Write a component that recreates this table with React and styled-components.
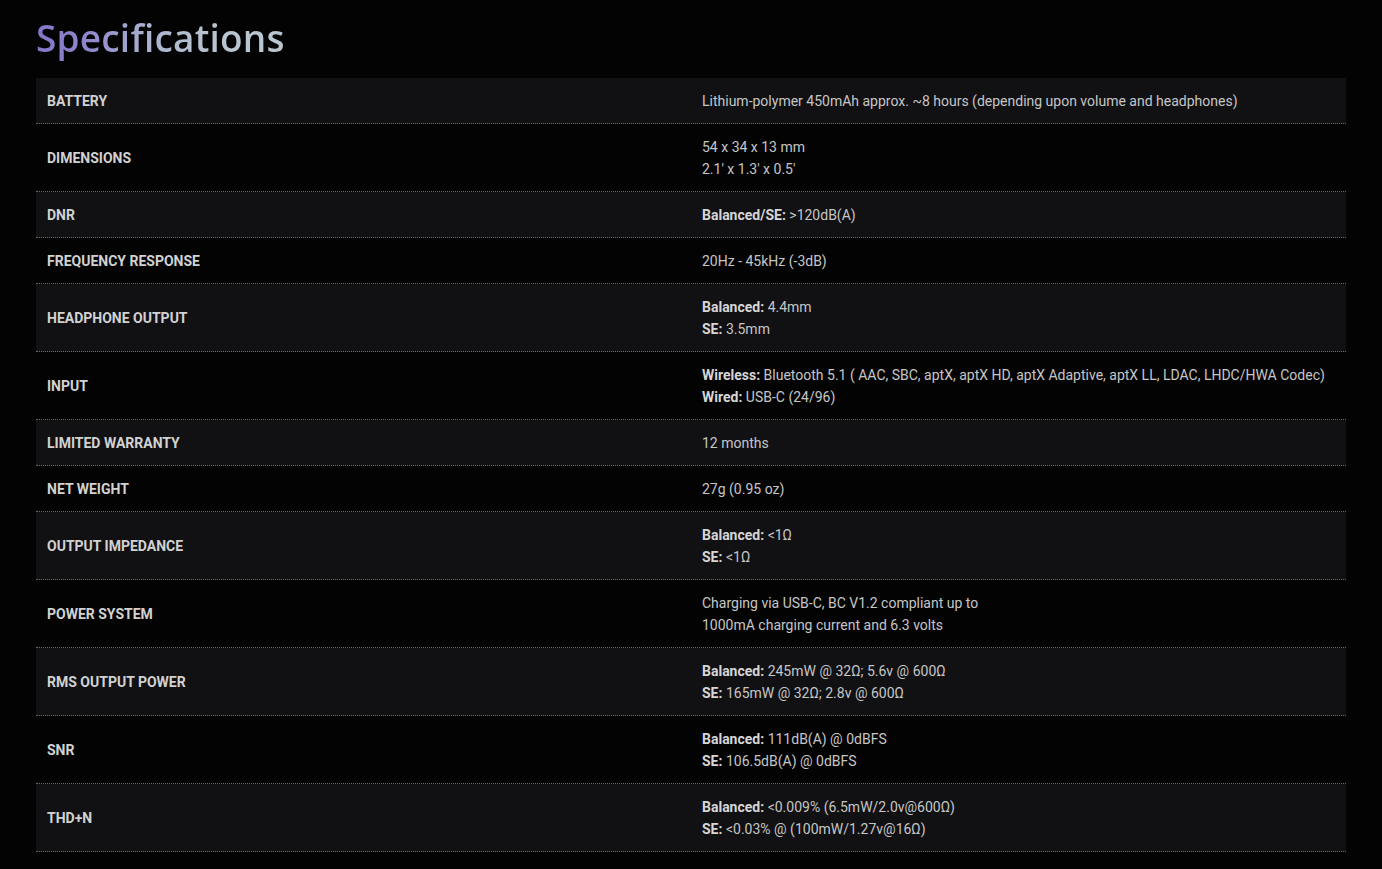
import React from 'react';
import styled, { createGlobalStyle } from 'styled-components';

const GlobalStyle = createGlobalStyle`
  html, body {
    margin: 0;
    padding: 0;
    background: #030303;
  }
  body {
    font-family: Roboto, "Liberation Sans", Arial, sans-serif;
  }
`;

const Page = styled.div`
  padding: 11px 36px 16px 36px;
  min-height: 869px;
  box-sizing: border-box;
  background: #030303;
`;

const Title = styled.h1`
  margin: 0 0 13px 0;
  font-family: "Open Sans", "Noto Sans", sans-serif;
  font-weight: 600;
  font-size: 37px;
  line-height: 54px;
  letter-spacing: 0.2px;
  display: inline-block;
  background: linear-gradient(to right, #8277c8 0%, #8d86cc 20%, #a9b3cf 45%, #b8c4cf 70%, #bac6cf 100%);
  -webkit-background-clip: text;
  background-clip: text;
  color: transparent;
`;

const Table = styled.div`
  display: flex;
  flex-direction: column;
`;

const Row = styled.div`
  display: grid;
  grid-template-columns: 50% 50%;
  align-items: center;
  background: ${(p) => (p.$shaded ? '#111113' : '#030303')};
  border-bottom: 1px dotted #6a6a6a;
  padding: 12px 0 11px;
  font-size: 14px;
  line-height: 22px;
`;

const Label = styled.div`
  padding-left: 11px;
  font-weight: 700;
  text-transform: uppercase;
  color: #d2d2d2;
`;

const Value = styled.div`
  padding-left: 11px;
  color: #c6c6c6;
`;

const Line = styled.div`
  white-space: nowrap;
`;

const Key = styled.b`
  font-weight: 700;
  color: #d6d6d6;
`;

const specs = [
  ['Battery', [[null, 'Lithium-polymer 450mAh approx. ~8 hours (depending upon volume and headphones)']]],
  ['Dimensions', [[null, '54 x 34 x 13 mm'], [null, "2.1' x 1.3' x 0.5'"]]],
  ['DNR', [['Balanced/SE:', ' >120dB(A)']]],
  ['Frequency Response', [[null, '20Hz - 45kHz (-3dB)']]],
  ['Headphone Output', [['Balanced:', ' 4.4mm'], ['SE:', ' 3.5mm']]],
  ['Input', [
    ['Wireless:', ' Bluetooth 5.1 ( AAC, SBC, aptX, aptX HD, aptX Adaptive, aptX LL, LDAC, LHDC/HWA Codec)'],
    ['Wired:', ' USB-C (24/96)'],
  ]],
  ['Limited Warranty', [[null, '12 months']]],
  ['Net Weight', [[null, '27g (0.95 oz)']]],
  ['Output Impedance', [['Balanced:', ' <1Ω'], ['SE:', ' <1Ω']]],
  ['Power System', [[null, 'Charging via USB-C, BC V1.2 compliant up to'], [null, '1000mA charging current and 6.3 volts']]],
  ['RMS Output Power', [['Balanced:', ' 245mW @ 32Ω; 5.6v @ 600Ω'], ['SE:', ' 165mW @ 32Ω; 2.8v @ 600Ω']]],
  ['SNR', [['Balanced:', ' 111dB(A) @ 0dBFS'], ['SE:', ' 106.5dB(A) @ 0dBFS']]],
  ['THD+N', [['Balanced:', ' <0.009% (6.5mW/2.0v@600Ω)'], ['SE:', ' <0.03% @ (100mW/1.27v@16Ω)']]],
];

export default function App() {
  return (
    <Page>
      <GlobalStyle />
      <Title>Specifications</Title>
      <Table>
        {specs.map(([label, lines], i) => (
          <Row key={label} $shaded={i % 2 === 0}>
            <Label>{label}</Label>
            <Value>
              {lines.map(([key, text], j) => (
                <Line key={j}>
                  {key && <Key>{key}</Key>}
                  {text}
                </Line>
              ))}
            </Value>
          </Row>
        ))}
      </Table>
    </Page>
  );
}
